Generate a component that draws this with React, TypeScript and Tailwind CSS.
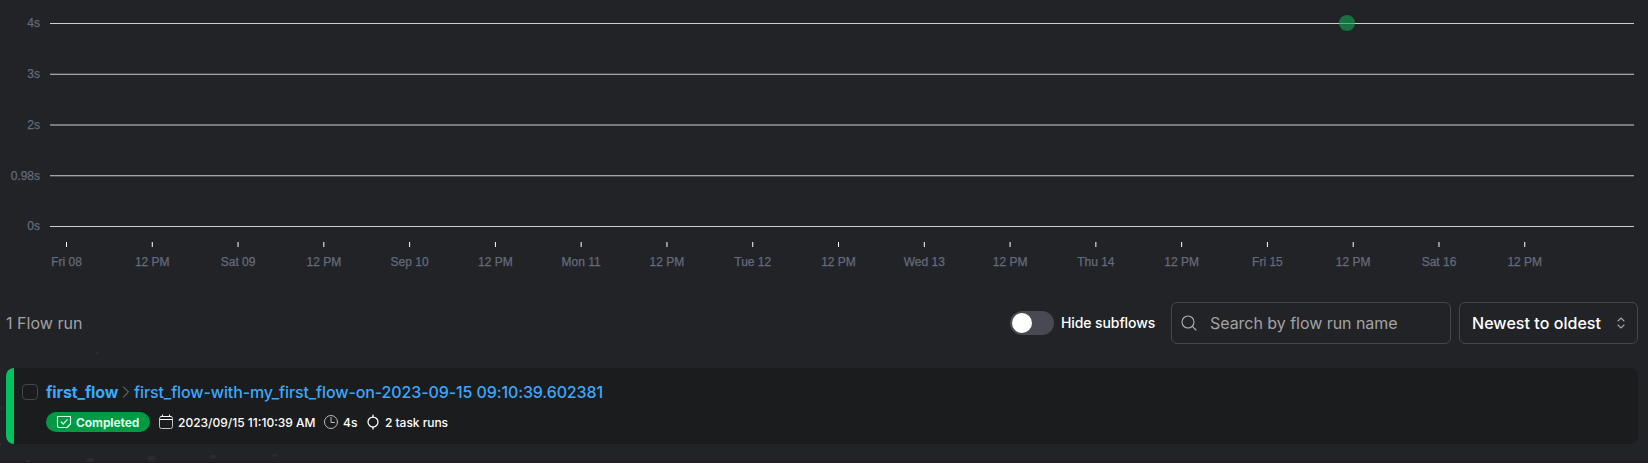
const yTicks = [
  { label: "4s", line: 23.5, y: 23.1 },
  { label: "3s", line: 74.25, y: 73.9 },
  { label: "2s", line: 125, y: 124.7 },
  { label: "0.98s", line: 175.75, y: 175.5 },
  { label: "0s", line: 226.5, y: 225.6 },
];

const days = ["Fri 08", "Sat 09", "Sep 10", "Mon 11", "Tue 12", "Wed 13", "Thu 14", "Fri 15", "Sat 16"];
const xTicks = days.flatMap((day) => [day, "12 PM"]);

const specks = [
  { x: 97, y: 353, rx: 2, ry: 1.2 },
  { x: 1, y: 408, rx: 2, ry: 1.5 },
  { x: 0, y: 444, rx: 1.5, ry: 1.5 },
  { x: 28, y: 461, rx: 2.2, ry: 1.3 },
  { x: 90, y: 459.7, rx: 3.3, ry: 2 },
  { x: 151.5, y: 458.3, rx: 4.3, ry: 2.7 },
  { x: 213, y: 456.7, rx: 3.3, ry: 2 },
  { x: 274.7, y: 455.5, rx: 2.2, ry: 1.5 },
];

function Specks() {
  return (
    <svg className="pointer-events-none absolute inset-0 h-full w-full" viewBox="0 0 1648 462" fill="#2b2c30">
      {specks.map((s) => (
        <ellipse key={s.x} cx={s.x} cy={s.y} rx={s.rx} ry={s.ry} />
      ))}
    </svg>
  );
}

function Chart() {
  return (
    <svg className="block h-[296px] w-full shrink-0" viewBox="0 0 1648 296" fontFamily="'Liberation Sans', Arial, sans-serif" fontSize="12">
      {yTicks.map((t) => (
        <g key={t.label}>
          <line x1="50" x2="1634" y1={t.line} y2={t.line} stroke="#fff" strokeOpacity="0.78" />
          <text x="40" y={t.y + 4.2} textAnchor="end" fill="#646b7b" stroke="#646b7b" strokeWidth="0.25">{t.label}</text>
        </g>
      ))}
      {xTicks.map((label, i) => {
        const x = 66.5 + i * 85.78;
        return (
          <g key={i}>
            <line x1={x} x2={x} y1="242" y2="247" stroke="#fff" />
            <text x={x} y="266" textAnchor="middle" fill="#646b7b" stroke="#646b7b" strokeWidth="0.25">{label}</text>
          </g>
        );
      })}
      <circle cx="1347" cy="23" r="8" fill="#10a553" fillOpacity="0.6" />
    </svg>
  );
}

function Toolbar() {
  return (
    <div className="flex h-[54px] items-center pr-[10px] pl-[6px]">
      <span className="text-[16px] tracking-[0.03px] text-[#a2a2a2]">1 Flow run</span>
      <span className="ml-auto flex h-6 w-11 items-center rounded-full bg-[#494953] p-[2px]">
        <span className="h-5 w-5 rounded-full bg-white" />
      </span>
      <span className="ml-[7px] w-[95px] pb-[2px] text-[14px] font-medium tracking-[-0.1px] whitespace-nowrap text-white">Hide subflows</span>
      <div className="ml-[15px] flex h-[42px] w-[280px] items-center rounded-md border border-[#46464d]">
        <svg className="ml-2 h-[18px] w-[18px]" viewBox="0 0 18 18" fill="none" stroke="#b0b0b0" strokeWidth="1.1">
          <circle cx="8" cy="8" r="6" />
          <path d="M12.3 12.3 16 16" strokeLinecap="round" />
        </svg>
        <span className="ml-[12px] text-[16px] tracking-[-0.04px] text-[#a2a2a2]">Search by flow run name</span>
      </div>
      <div className="ml-2 flex h-[42px] w-[179px] items-center rounded-md border border-[#46464d] pl-[12px]">
        <span className="text-[16px] font-medium tracking-[0.05px] whitespace-nowrap text-white">Newest to oldest</span>
        <svg className="mr-[10px] ml-auto h-3 w-3 shrink-0" viewBox="0 0 12 12" fill="none" stroke="#a2a2a2" strokeWidth="1.1" strokeLinecap="round" strokeLinejoin="round">
          <path d="M3 4 6 1l3 3M3 8l3 3 3-3" />
        </svg>
      </div>
    </div>
  );
}

function FlowRun() {
  return (
    <div className="relative mr-[10px] ml-[6px] flex h-[76px] overflow-hidden rounded-lg bg-[#1b1c1d]">
      <div className="w-2 shrink-0 bg-[#00c25f]" />
      <span className="mt-4 ml-2 h-4 w-4 shrink-0 rounded border border-[#46464d]" />
      <div className="ml-2">
        <div className="mt-3 flex h-6 items-center text-[16px] whitespace-nowrap text-[#3ea8fb]">
          <span className="w-[72px] font-bold tracking-[-0.15px]">first_flow</span>
          <svg className="mx-[4px] h-3 w-2" viewBox="0 0 8 12" fill="none" stroke="#888" strokeLinecap="round" strokeLinejoin="round">
            <path d="M1.5 1 6.5 6l-5 5" />
          </svg>
          <span className="font-medium tracking-[-0.11px]">first_flow-with-my_first_flow-on-2023-09-15 09:10:39.602381</span>
        </div>
        <div className="mt-2 flex h-5 items-center text-[12px] font-medium whitespace-nowrap text-white">
          <span className="flex h-5 w-[104px] items-center rounded-full bg-[#009a44] pl-[10px] font-bold tracking-[-0.1px] text-[#dcfce7]">
            <svg className="mr-[4px] h-4 w-4" viewBox="0 0 16 16" fill="none" stroke="currentColor" strokeWidth="1.2" strokeLinecap="round" strokeLinejoin="round">
              <path d="M1.500 2.500h13v7.500l-3.500 3.500H3a1.500 1.500 0 0 1-1.500-1.500ZM5.200 8l2 2 4-4.300" />
            </svg>
            <span className="pt-[2px]">Completed</span>
          </span>
          <svg className="mr-[4px] ml-2 h-4 w-4" viewBox="0 0 16 16" fill="none" stroke="#c4c4c4" strokeLinecap="round">
            <rect x="1.500" y="2.500" width="13" height="12" rx="2" />
            <path d="M2 5.500h12M4.500 1v1.500M11.500 1v1.500M3 2.500h10" stroke="#fff" />
          </svg>
          <span className="w-[138px] pt-[2px]">2023/09/15 11:10:39 AM</span>
          <svg className="mr-[4px] ml-[7px] h-4 w-4" viewBox="0 0 16 16" fill="none" stroke="#bbb" strokeLinecap="round">
            <circle cx="8" cy="8" r="6.500" />
            <path d="M8 3.500V8.500h3.500" />
          </svg>
          <span className="w-[14px] pt-[2px]">4s</span>
          <svg className="mr-[4px] ml-2 h-4 w-4" viewBox="0 0 16 16" fill="none" stroke="currentColor" strokeLinecap="round">
            <circle cx="8" cy="8" r="5" strokeWidth="1.250" />
            <path d="M8 1v2M8 13v2" strokeWidth="1.250" />
          </svg>
          <span className="pt-[2px] tracking-[-0.04px]">2 task runs</span>
        </div>
      </div>
    </div>
  );
}

export default function App() {
  return (
    <div className="relative h-[463px] overflow-hidden border-b border-[#1d1b20] bg-[#222327] font-['Inter',sans-serif]">
      <Specks />
      <Chart />
      <Toolbar />
      <div className="h-[18px]" />
      <FlowRun />
    </div>
  );
}
